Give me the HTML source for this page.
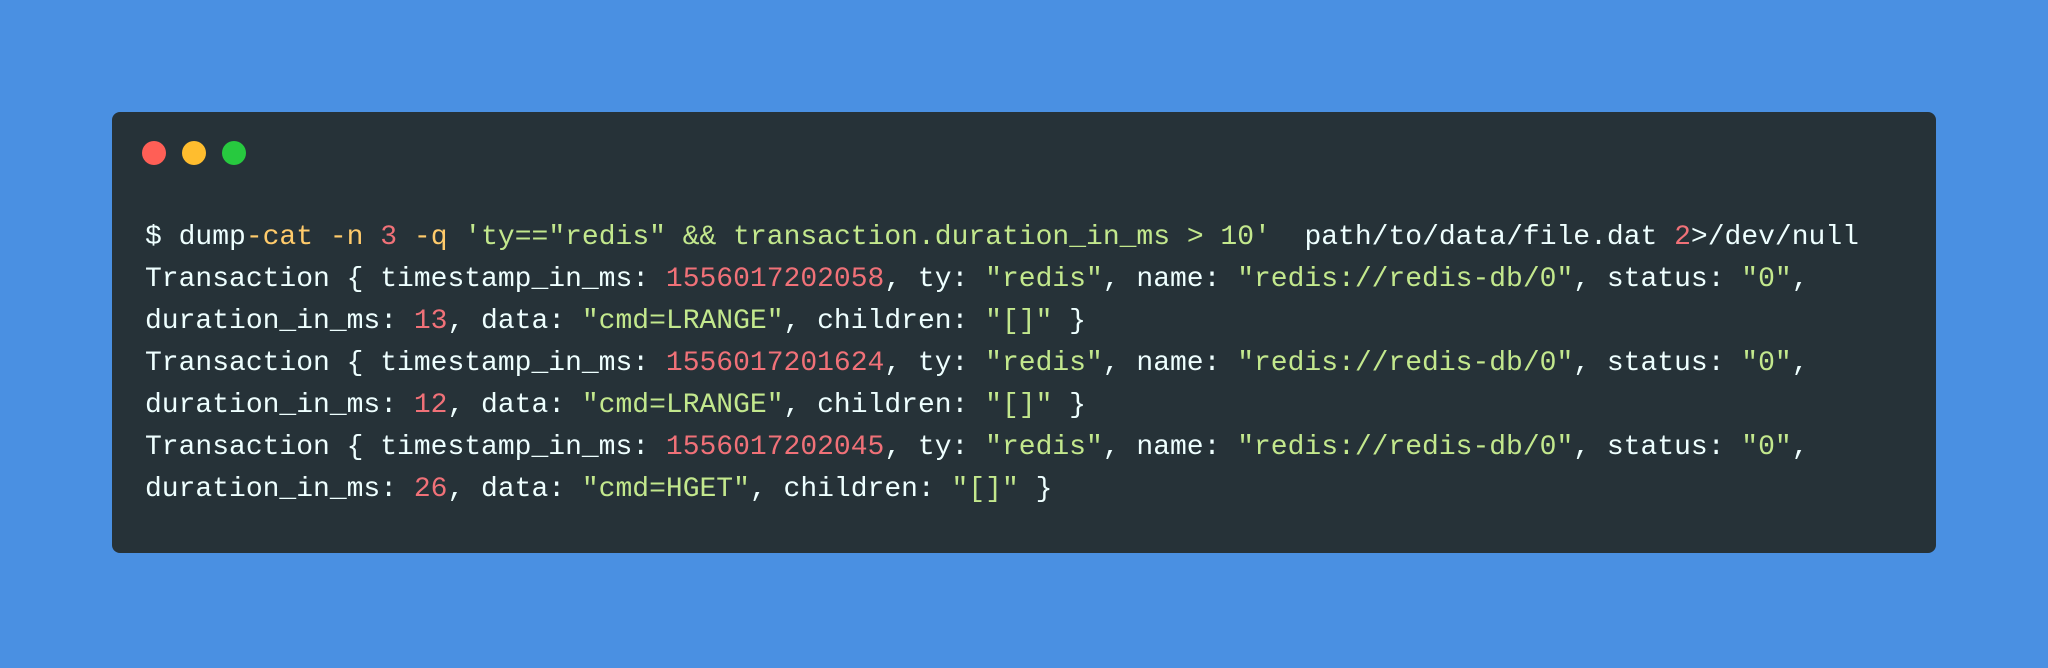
<!DOCTYPE html>
<html><head><meta charset="utf-8"><style>
html,body{margin:0;padding:0;}
body{width:2048px;height:668px;background:#4a90e2;position:relative;overflow:hidden;}
.win{position:absolute;left:112px;top:112px;width:1824px;height:441px;background:#263238;border-radius:8px;}
.dot{position:absolute;top:141px;width:24px;height:24px;border-radius:50%;}
pre{position:absolute;left:145px;top:217px;margin:0;font-family:"Liberation Mono",monospace;font-size:28px;line-height:42px;color:#eeffff;white-space:pre;}
.o{color:#ffcb6b}.r{color:#f07178}.g{color:#c3e88d}
</style></head><body>
<div class="win"></div>
<div class="dot" style="left:142px;background:#ff5f56"></div>
<div class="dot" style="left:182px;background:#ffbd2e"></div>
<div class="dot" style="left:222px;background:#27c93f"></div>
<pre>$ dump<span class="o">-cat -n</span> <span class="r">3</span> <span class="o">-q</span> <span class="g">'ty=="redis" &amp;&amp; transaction.duration_in_ms &gt; 10'</span>  path/to/data/file.dat <span class="r">2</span>&gt;/dev/null
Transaction { timestamp_in_ms: <span class="r">1556017202058</span>, ty: <span class="g">"redis"</span>, name: <span class="g">"redis://redis-db/0"</span>, status: <span class="g">"0"</span>,
duration_in_ms: <span class="r">13</span>, data: <span class="g">"cmd=LRANGE"</span>, children: <span class="g">"[]"</span> }
Transaction { timestamp_in_ms: <span class="r">1556017201624</span>, ty: <span class="g">"redis"</span>, name: <span class="g">"redis://redis-db/0"</span>, status: <span class="g">"0"</span>,
duration_in_ms: <span class="r">12</span>, data: <span class="g">"cmd=LRANGE"</span>, children: <span class="g">"[]"</span> }
Transaction { timestamp_in_ms: <span class="r">1556017202045</span>, ty: <span class="g">"redis"</span>, name: <span class="g">"redis://redis-db/0"</span>, status: <span class="g">"0"</span>,
duration_in_ms: <span class="r">26</span>, data: <span class="g">"cmd=HGET"</span>, children: <span class="g">"[]"</span> }</pre>
</body></html>
